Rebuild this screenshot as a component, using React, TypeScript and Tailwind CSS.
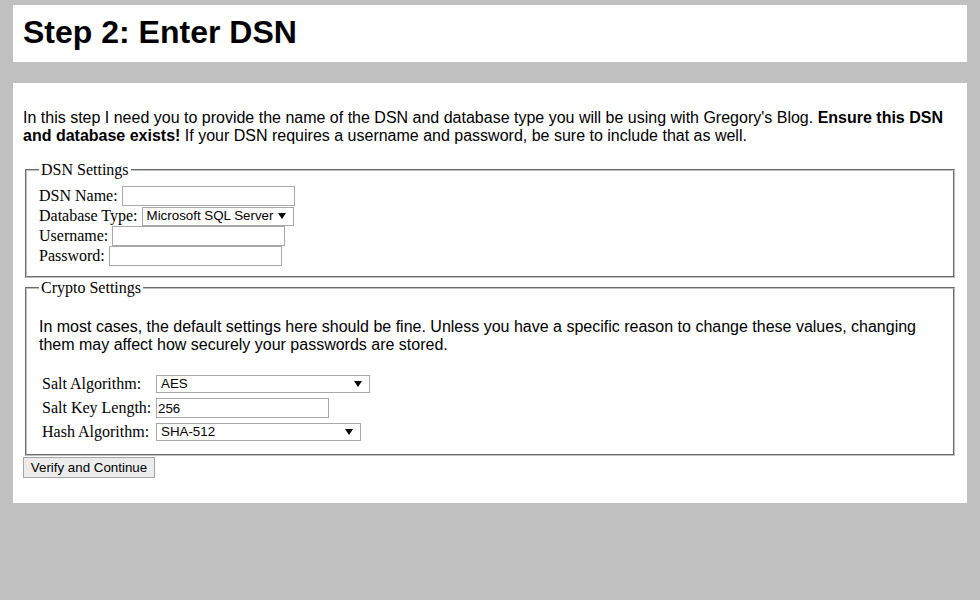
const sans = "font-['Liberation_Sans',Arial,sans-serif]"
const serif = "font-['Liberation_Serif','Times_New_Roman',serif]"

function Arrow() {
  return (
    <svg width="8" height="6" viewBox="0 0 8 6" className="shrink-0">
      <polygon points="0,0 8,0 4,6" fill="#000" />
    </svg>
  )
}

function FakeSelect({ value, width, height }: { value: string; width: string; height: string }) {
  return (
    <div
      className={`${width} ${height} ${sans} flex items-center justify-between border border-[#a9a9a9] bg-white pl-[4px] pr-[7px] text-[13.33px] text-black`}
    >
      <span>{value}</span>
      <Arrow />
    </div>
  )
}

function TextInput({ value, width }: { value?: string; width: string }) {
  return (
    <input
      readOnly
      value={value ?? ''}
      className={`${width} ${sans} h-[20px] border border-[#a9a9a9] bg-white px-[1px] text-[13.33px] text-black outline-none`}
    />
  )
}

export default function App() {
  return (
    <div className={`min-h-[600px] bg-[#c0c0c0] px-[13px] pt-[5px] ${sans} text-black`}>
      {/* Page title */}
      <div className="bg-white px-[10px] pt-[9px] pb-[11px]">
        <h1 className="text-[32px] font-bold leading-[37px]">Step 2: Enter DSN</h1>
      </div>

      {/* Step body */}
      <div className="mt-[21px] bg-white px-[10px] pt-[26px] pb-[25px]">
        <p className="text-[16px] leading-[18px]">
          In this step I need you to provide the name of the DSN and database type you will be using with
          Gregory's Blog. <b>Ensure this DSN and database exists!</b> If your DSN requires a username and
          password, be sure to include that as well.
        </p>

        <fieldset className="mx-[2px] mt-[16px] border-2 border-[#c0c0c0] [border-style:groove] px-[12px] pb-[10px]">
          <legend className={`${serif} px-[2px] text-[16px] leading-[18px]`}>DSN Settings</legend>
          <div className={`${serif} flex flex-col pt-[7px] text-[16px]`}>
            <div className="flex h-[20px] items-center gap-[4px]">
              <span>DSN Name:</span>
              <TextInput width="w-[173px]" />
            </div>
            <div className="flex h-[20px] items-center gap-[4px]">
              <span>Database Type:</span>
              <FakeSelect value="Microsoft SQL Server" width="w-[152px]" height="h-[19px]" />
            </div>
            <div className="flex h-[20px] items-center gap-[4px]">
              <span>Username:</span>
              <TextInput width="w-[173px]" />
            </div>
            <div className="flex h-[20px] items-center gap-[4px]">
              <span>Password:</span>
              <TextInput width="w-[173px]" />
            </div>
          </div>
        </fieldset>

        <fieldset className="mx-[2px] mt-[1px] border-2 border-[#c0c0c0] [border-style:groove] px-[12px] pb-[10px]">
          <legend className={`${serif} px-[2px] text-[16px] leading-[18px]`}>Crypto Settings</legend>
          <p className="my-[16px] pt-[5px] text-[16px] leading-[18px]">
            In most cases, the default settings here should be fine. Unless you have a specific reason to change
            these values, changing them may affect how securely your passwords are stored.
          </p>
          <div className={`${serif} ml-[3px] grid grid-cols-[114px_auto] pt-[2px] text-[16px]`}>
            <div className="flex h-[24px] items-center">Salt Algorithm:</div>
            <div className="flex h-[24px] items-center">
              <FakeSelect value="AES" width="w-[214px]" height="h-[18px]" />
            </div>
            <div className="flex h-[24px] items-center">Salt Key Length:</div>
            <div className="flex h-[24px] items-center">
              <TextInput value="256" width="w-[173px]" />
            </div>
            <div className="flex h-[24px] items-center">Hash Algorithm:</div>
            <div className="flex h-[24px] items-center">
              <FakeSelect value="SHA-512" width="w-[205px]" height="h-[18px]" />
            </div>
          </div>
        </fieldset>

        <button className="mt-[1px] block h-[21px] w-[132px] border border-[#a6a6a6] bg-[#ececec] text-[13.33px] leading-none text-black">
          Verify and Continue
        </button>
      </div>
    </div>
  )
}
